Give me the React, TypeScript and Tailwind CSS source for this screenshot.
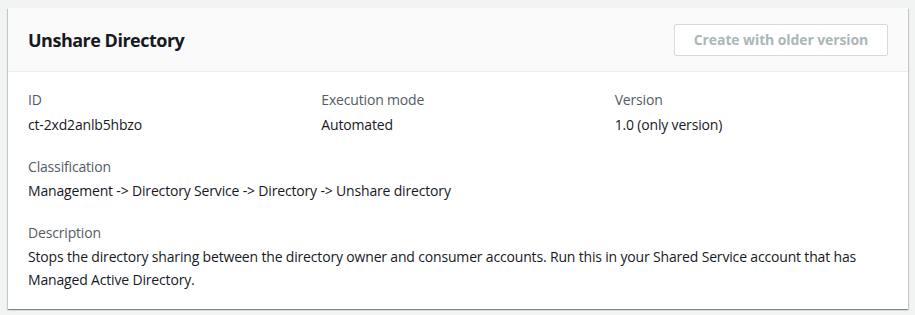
export default function App() {
  return (
    <div className="min-h-[315px] bg-[#f2f3f3] p-2 pr-[7px] font-['Open_Sans',sans-serif] text-[#16191f]">
      <div className="bg-white shadow-[0_1px_1px_0_rgba(0,28,36,0.3),1px_1px_1px_0_rgba(0,28,36,0.15),-1px_1px_1px_0_rgba(0,28,36,0.15)]">
        <div className="flex h-16 items-center justify-between border-b border-[#eaeded] bg-[#fafafa] pl-5 pr-5">
          <h2 className="text-lg font-bold tracking-[-0.5px]">Unshare Directory</h2>
          <button className="h-8 w-[214px] rounded-[2px] border border-[#d5dbdb] bg-white text-sm font-bold tracking-[-0.1px] text-[#aab7b8]">
            Create with older version
          </button>
        </div>
        <div className="px-5 pt-4 pb-[18px] text-sm leading-[23px] tracking-[-0.17px]">
          <div className="grid grid-cols-3 gap-x-5">
            <div>
              <div className="text-[#545b64]">ID</div>
              <div className="mt-[2px]">ct-2xd2anlb5hbzo</div>
            </div>
            <div>
              <div className="text-[#545b64]">Execution mode</div>
              <div className="mt-[2px]">Automated</div>
            </div>
            <div>
              <div className="text-[#545b64]">Version</div>
              <div className="mt-[2px]">1.0 (only version)</div>
            </div>
          </div>
          <div className="mt-[19px] text-[#545b64]">Classification</div>
          <div className="mt-[1px]">Management -&gt; Directory Service -&gt; Directory -&gt; Unshare directory</div>
          <div className="mt-[19px] text-[#545b64]">Description</div>
          <div className="mt-[1px]">
            Stops the directory sharing between the directory owner and consumer accounts. Run this in your Shared Service account that has Managed Active Directory.
          </div>
        </div>
      </div>
    </div>
  );
}
